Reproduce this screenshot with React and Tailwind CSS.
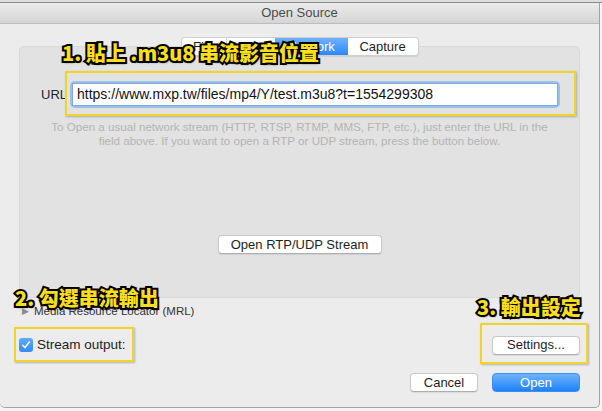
import React from 'react'

const ui = "font-['Liberation_Sans','Noto_Sans',sans-serif]"
const note = "z-20 font-['Noto_Sans_CJK_TC','Noto_Sans',sans-serif] font-black text-[20px] leading-[24px] text-[#f7df1e] [-webkit-text-stroke:4px_#000] [paint-order:stroke_fill] whitespace-nowrap [text-shadow:1px_2px_2px_rgba(0,0,0,0.5)]"

function Btn({ children, className = '' }) {
  return (
    <div className={`h-[19px] flex items-center justify-center rounded-[4px] bg-white border border-[#c9c9c9] border-b-[#aeaeae] shadow-[0_1px_1px_rgba(0,0,0,0.08)] text-[13px] text-[#1e1e1e] ${className}`}>
      {children}
    </div>
  )
}

export default function App() {
  return (
    <div className={`w-[602px] h-[411px] bg-[#f5f5f5] relative overflow-hidden ${ui}`}>
      {/* desktop behind */}
      <div className="h-[3px] bg-[#dedede] border-b border-[#8a8a8a]" />

      {/* window */}
      <div className="w-[600px] h-[405px] bg-[#ececec] rounded-b-[5px] border-r border-b border-[#a3a3a3] flex flex-col">
        <div className="h-[21px] shrink-0 border-b border-[#bdbdbd] bg-gradient-to-b from-[#ebebeb] to-[#d5d5d5] flex items-center justify-center text-[13px] text-[#4b4b4b]">
          Open Source
        </div>

        {/* tabs */}
        <div className="mt-[13px] flex justify-center relative z-10">
          <div className="flex h-[19px] rounded-[4px] bg-white border border-[#cfcfcf] shadow-[0_1px_1px_rgba(0,0,0,0.08)] text-[13px] text-[#1e1e1e] overflow-hidden">
            <div className="w-[45px] flex items-center justify-center border-r border-[#d6d6d6]">File</div>
            <div className="w-[48px] flex items-center justify-center">Disc</div>
            <div className="w-[73px] flex items-center justify-center bg-gradient-to-b from-[#6db2fb] to-[#2a86fb] text-white">Network</div>
            <div className="w-[70px] flex items-center justify-center">Capture</div>
          </div>
        </div>

        {/* tab content */}
        <div className="mx-[19px] -mt-[10px] h-[252px] shrink-0 rounded-[5px] bg-[#e2e2e2] border border-[#d9d9d9] flex flex-col">
          <div className="mt-[34px] flex items-center pl-[21px]">
            <span className="w-[29px] text-[13px] text-[#262626]">URL</span>
            <div className="w-[490px] h-[27px] p-[2px] rounded-[5px] bg-[#9bc0ee]">
              <div className="h-full bg-white border border-[#7ea7dd] flex items-center pl-[4px] text-[14px] text-[#111]">
                https://www.mxp.tw/files/mp4/Y/test.m3u8?t=1554299308
              </div>
            </div>
          </div>
          <p className="mt-[12px] text-center text-[11.6px] leading-[14px] text-[#b4b4b4]">
            To Open a usual network stream (HTTP, RTSP, RTMP, MMS, FTP, etc.), just enter the URL in the
            <br />
            field above. If you want to open a RTP or UDP stream, press the button below.
          </p>
          <div className="mt-[87px] flex justify-center">
            <Btn className="w-[164px]">Open RTP/UDP Stream</Btn>
          </div>
        </div>

        {/* MRL */}
        <div className="mt-[7px] h-[14px] flex items-center pl-[22px] text-[11.5px] text-[#333]">
          <span className="text-[9px] text-[#8a8a8a] mr-[5px]">▶</span>
          Media Resource Locator (MRL)
        </div>

        {/* stream output row */}
        <div className="mt-[16px] flex items-center justify-between pl-[19px] pr-[19px]">
          <div className="flex items-center gap-[4px]">
            <div className="w-[14px] h-[14px] rounded-[3px] bg-gradient-to-b from-[#5eaafb] to-[#2f8cf9] flex items-center justify-center">
              <svg width="10" height="10" viewBox="0 0 10 10">
                <path d="M1.8 5.2 L4 7.6 L8.3 2" fill="none" stroke="#fff" strokeWidth="1.5" strokeLinecap="round" strokeLinejoin="round" />
              </svg>
            </div>
            <span className="text-[13.5px] text-[#1e1e1e]">Stream output:</span>
          </div>
          <Btn className="w-[88px]">Settings...</Btn>
        </div>

        {/* bottom buttons */}
        <div className="mt-[18px] flex justify-end gap-[14px] pr-[19px]">
          <Btn className="w-[68px]">Cancel</Btn>
          <div className="w-[88px] h-[19px] flex items-center justify-center rounded-[4px] bg-gradient-to-b from-[#6cb4fb] to-[#1a80fa] border border-[#3d8ff5] text-[13px] text-white">
            Open
          </div>
        </div>
      </div>

      {/* annotation boxes */}
      <div className="absolute left-[65px] top-[71px] w-[511px] h-[45px] border-2 border-[#f0d428] shadow-[1px_1px_2px_rgba(0,0,0,0.25)]" />
      <div className="absolute left-[14px] top-[327px] w-[120px] h-[35px] border-2 border-[#f0d428] shadow-[1px_1px_2px_rgba(0,0,0,0.25)]" />
      <div className="absolute left-[480px] top-[323px] w-[108px] h-[41px] border-2 border-[#f0d428] shadow-[1px_1px_2px_rgba(0,0,0,0.25)]" />

      {/* annotation labels */}
      <div className={`absolute left-[62px] top-[41px] ${note}`}>1. 貼上 .m3u8 串流影音位置</div>
      <div className={`absolute left-[15px] top-[286px] ${note}`}>2. 勾選串流輸出</div>
      <div className={`absolute left-[477px] top-[295px] ${note}`}>3. 輸出設定</div>
    </div>
  )
}
